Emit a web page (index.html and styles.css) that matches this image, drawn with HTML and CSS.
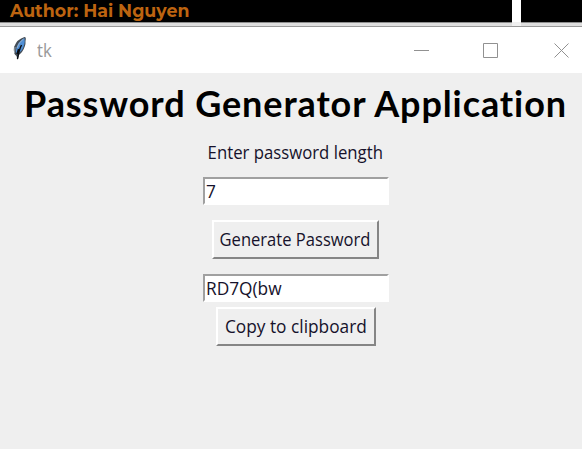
FILE: index.html
```
<!DOCTYPE html>
<html lang="en">
<head>
<meta charset="utf-8">
<title>tk</title>
<link rel="stylesheet" href="styles.css">
</head>
<body>
<header class="backdrop"><span class="author">Author: Hai Nguyen</span><i class="strip"></i></header>
<div class="window-edge"><i class="edge-glow"></i></div>
<section class="titlebar">
<svg class="feather" width="16" height="26" viewBox="0 0 16 26">
<path d="M12.5 1 Q14.500 1 13.500 5 Q14 10 10 16 L7 19 L5.500 24 L4.500 20 Q1 18 2 11 Q5 3 12.500 1Z" fill="#444d56"/>
<path d="M12.500 2Q13.500 8 10 14L6.500 17.500Q3.500 18 4 14Q5 6 12.500 2Z" fill="#4f8fd6"/>
<path d="M11.500 3Q7 6 5 12M3 11L2.500 17" fill="none" stroke="#aebdc9" stroke-width=".8"/>
<path d="M9.500 9Q7 14 5.500 23M6.500 13L5 18" fill="none" stroke="#080c12" stroke-width="1.400"/>
</svg>
<span class="caption">tk</span>
<div class="controls">
<svg width="15" height="15"><path d="M0 7.500H15" /></svg>
<svg width="15" height="15"><path d="M.5 .5H14.500V14.500H.5Z" /></svg>
<svg width="15" height="15"><path d="M.5 .5L14.500 14.500M14.500 .5L.5 14.500" /></svg>
</div>
</section>
<main class="app">
<h1><span class="fit">Password Generator Application</span></h1>
<label class="prompt"><span class="fit">Enter password length</span></label>
<div class="entry length"><span class="fit">7</span></div>
<button class="generate"><span class="fit">Generate Password</span></button>
<div class="entry"><span class="fit">RD7Q(bw</span></div>
<button class="copy"><span class="fit">Copy to clipboard</span></button>
</main>
</body>
</html>
```
FILE: styles.css
```
* { box-sizing: border-box; }
body { margin: 0; width: 582px; height: 449px; overflow: hidden; background: #efefef; display: flex; flex-direction: column; align-items: stretch; font-family: "Open Sans", sans-serif; color: #16122b; }
.backdrop { height: 22px; background: #000; display: flex; justify-content: space-between; padding: 0 61px 0 10px; flex: none; }
.author { font: 700 17.4px/22px "Montserrat", "Lato", sans-serif; color: #bd6410; white-space: nowrap; }
.strip { width: 9px; background: #fff; }
.window-edge { height: 5px; flex: none; border-top: 1px solid #8e8e8e; border-bottom: 1px solid #999; background: #dedede; display: flex; justify-content: flex-end; padding-right: 61px; }
.edge-glow { width: 9px; margin-top: -1px; background: #f0f0f0; }
.titlebar { height: 46px; background: #fff; flex: none; display: flex; align-items: center; padding: 0 13px 0 12px; }
.feather { margin-top: -2px; }
.caption { margin-left: 9px; font-size: 18px; color: #999; transform: scaleX(.93); transform-origin: left; }
.controls { margin-left: auto; display: flex; }
.controls svg { margin-left: 54px; fill: none; stroke: #919191; stroke-width: 1; }
.controls svg:last-child { margin-left: 56px; }
.app { display: flex; flex-direction: column; align-items: center; padding-left: 9px; font-size: 18px; }
.fit { display: inline-block; white-space: nowrap; }
h1 { margin: 6px 0 0; height: 48px; font: bold 36px/48px "Lato", sans-serif; color: #000; display: flex; justify-content: center; width: 544px; letter-spacing: .9px; font-variant-ligatures: none; }
.prompt { height: 24px; line-height: 24px; margin-top: 13px; }
.prompt .fit { transform: scaleX(.93); }
.entry { width: 186px; height: 28px; margin-top: 15px; background: #fff; border: 2px solid #fff; border-top-color: #a0a0a0; border-left-color: #a0a0a0; padding-left: 1px; line-height: 25px; }
.entry.length { margin-top: 13px; }
.entry .fit { transform: scaleX(.96); transform-origin: left; }
button { font: inherit; color: inherit; padding: 0 0 2px; background: #efefef; border: 2px solid #fff; border-right-color: #858585; border-bottom-color: #858585; display: flex; align-items: center; justify-content: center; }
button .fit { transform: scaleX(.92); }
.generate { width: 167px; height: 39px; margin-top: 15px; }
.copy { width: 160px; height: 39px; margin-top: 5px; }
.copy .fit { transform: scaleX(.96); }
```
